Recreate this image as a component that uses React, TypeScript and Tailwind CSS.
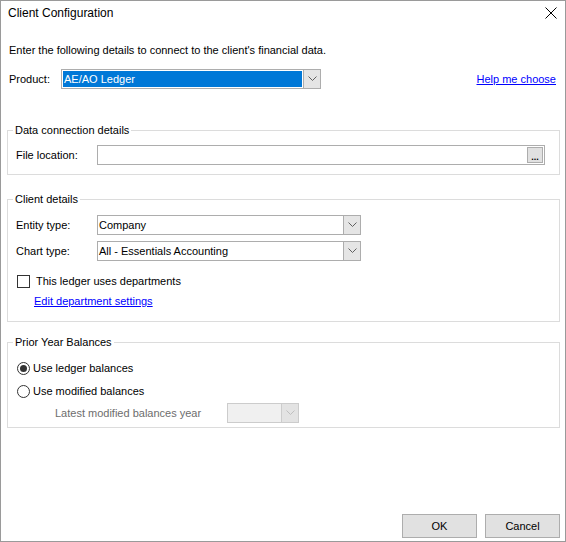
import React from "react";

const FONT = "font-['Liberation_Sans','Arial',sans-serif]";

const Chevron: React.FC<{ color?: string }> = ({ color = "#606060" }) => (
  <svg width="9" height="6" viewBox="0 0 9 6">
    <polyline points="0.5,0.5 4.5,4.5 8.5,0.5" fill="none" stroke={color} strokeWidth="1" />
  </svg>
);

const Combo: React.FC<{ value: string; width: string; selected?: boolean }> = ({ value, width, selected }) => (
  <div className={`${width} h-[20px] flex border border-[#adadad] bg-white`}>
    {selected ? (
      <div className="flex-1 p-[1px]">
        <div className="h-full bg-[#0078d7] text-white pl-[1px] flex items-center leading-[13px]">{value}</div>
      </div>
    ) : (
      <div className="flex-1 pl-[1px] flex items-center leading-[13px] text-black">{value}</div>
    )}
    <div className="w-[17px] border-l border-[#adadad] bg-[#e5e5e5] flex items-center justify-center">
      <Chevron />
    </div>
  </div>
);

const Group: React.FC<{ title: string; className?: string; children: React.ReactNode }> = ({ title, className, children }) => (
  <fieldset className={`border border-[#dcdcdc] ${className ?? ""}`}>
    <legend className="-ml-[3px] px-[2px] leading-[13px]">{title}</legend>
    {children}
  </fieldset>
);

export default function App() {
  return (
    <div className={`${FONT} w-[566px] h-[542px] border border-[#9a9a9a] bg-white flex flex-col text-[11px] text-black`}>
      <div className="h-[24px] flex items-center pl-[7px] pr-[8px]">
        <span className="text-[12px] leading-[14px]">Client Configuration</span>
        <svg className="ml-auto" width="12" height="12" viewBox="0 0 12 12">
          <path d="M0.5 0.5 L11.5 11.5 M11.5 0.5 L0.5 11.5" stroke="#000" strokeWidth="1" />
        </svg>
      </div>

      <div className="flex-1 flex flex-col pl-[6px] pr-[5px]">
        <p className="mt-[19px] ml-[2px] leading-[13px]">
          Enter the following details to connect to the client's financial data.
        </p>

        <div className="mt-[12px] h-[20px] flex items-center pl-[2px]">
          <span className="w-[52px]">Product:</span>
          <Combo value="AE/AO Ledger" width="w-[260px]" selected />
          <a className="ml-auto mr-[4px] text-[#0000ff] underline cursor-pointer">Help me choose</a>
        </div>

        <Group title="Data connection details" className="mt-[35px] pl-[8px] pr-[14px] pb-[9px]">
          <div className="mt-[8px] h-[20px] flex items-center">
            <span className="w-[81px]">File location:</span>
            <div className="flex-1 h-[20px] border border-[#adadad] bg-white flex items-center justify-end pr-[1px]">
              <div className="w-[16px] h-[16px] border border-[#adadad] bg-[#e1e1e1] flex items-end justify-center pb-[2px]">
                <span className="text-[9px] font-bold leading-[6px]">...</span>
              </div>
            </div>
          </div>
        </Group>

        <Group title="Client details" className="mt-[18px] pl-[8px] pb-[13px]">
          <div className="mt-[9px] h-[20px] flex items-center">
            <span className="w-[81px]">Entity type:</span>
            <Combo value="Company" width="w-[264px]" />
          </div>
          <div className="mt-[6px] h-[20px] flex items-center">
            <span className="w-[81px]">Chart type:</span>
            <Combo value="All - Essentials Accounting" width="w-[264px]" />
          </div>
          <div className="mt-[14px] h-[13px] flex items-center ml-[1px]">
            <div className="w-[13px] h-[13px] border border-[#333333] bg-white" />
            <span className="ml-[6px]">This ledger uses departments</span>
          </div>
          <a className="block mt-[7px] ml-[18px] leading-[13px] text-[#0000ff] underline cursor-pointer">
            Edit department settings
          </a>
        </Group>

        <Group title="Prior Year Balances" className="mt-[14px] pl-[8px] pb-[4px]">
          <div className="mt-[13px] h-[13px] flex items-center ml-[1px]">
            <div className="w-[13px] h-[13px] rounded-full border border-[#333333] bg-white flex items-center justify-center">
              <div className="w-[7px] h-[7px] rounded-full bg-[#333333]" />
            </div>
            <span className="ml-[3px]">Use ledger balances</span>
          </div>
          <div className="mt-[10px] h-[13px] flex items-center ml-[1px]">
            <div className="w-[13px] h-[13px] rounded-full border border-[#333333] bg-white" />
            <span className="ml-[3px]">Use modified balances</span>
          </div>
          <div className="mt-[5px] h-[20px] flex items-center ml-[39px]">
            <span className="w-[172px] text-[#6d6d6d]">Latest modified balances year</span>
            <div className="w-[72px] h-[20px] flex border border-[#cccccc] bg-[#f0f0f0]">
              <div className="flex-1" />
              <div className="w-[17px] border-l border-[#cccccc] bg-[#e3e3e3] flex items-center justify-center">
                <Chevron color="#bfbfbf" />
              </div>
            </div>
          </div>
        </Group>

        <div className="mt-auto mb-[3px] flex justify-end gap-[8px]">
          <button className="w-[75px] h-[24px] border border-[#adadad] bg-[#e1e1e1]">OK</button>
          <button className="w-[75px] h-[24px] border border-[#adadad] bg-[#e1e1e1]">Cancel</button>
        </div>
      </div>
    </div>
  );
}
